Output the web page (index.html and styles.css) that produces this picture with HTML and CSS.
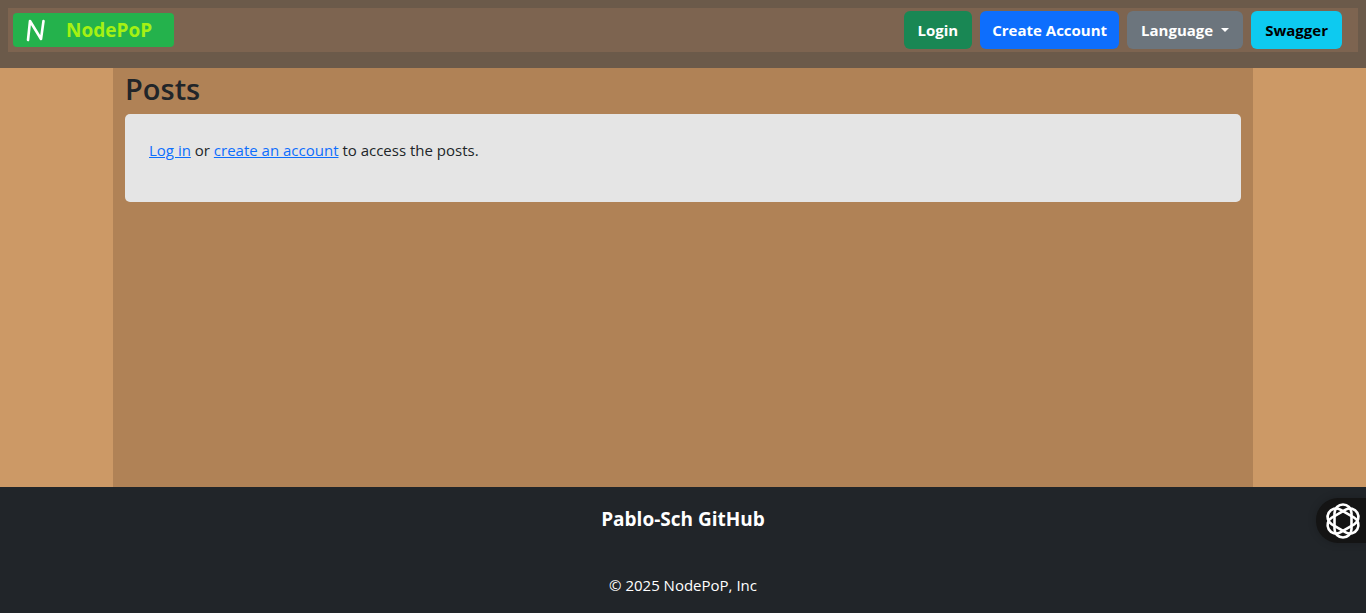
FILE: index.html
```html
<!DOCTYPE html>
<html lang="en">
<head>
<meta charset="utf-8">
<meta name="viewport" content="width=device-width, initial-scale=1">
<title>NodePoP</title>
<link rel="stylesheet" href="styles.css">
</head>
<body>
<header class="site-header">
  <nav class="navbar">
    <a class="brand" href="#">
      <svg class="brand-mark" viewBox="0 0 24 26" aria-hidden="true"><path d="M3 23 L5 4 L16 22 L18.500 4"/></svg>
      <span>NodePoP</span>
    </a>
    <div class="actions">
      <button class="btn btn-success" type="button">Login</button>
      <button class="btn btn-primary" type="button">Create Account</button>
      <button class="btn btn-secondary" type="button" aria-haspopup="true">Language<span class="caret"></span></button>
      <button class="btn btn-info" type="button">Swagger</button>
    </div>
  </nav>
</header>
<main class="container">
  <h1 class="title">Posts</h1>
  <section class="notice">
    <p class="notice-text"><a href="#">Log in</a> or <a href="#">create an account</a> to access the posts.</p>
  </section>
</main>
<footer class="site-footer">
  <a class="footer-link" href="#">Pablo-Sch GitHub</a>
  <p class="copyright">© 2025 NodePoP, Inc</p>
</footer>
<button class="widget" type="button" aria-label="Open assistant">
  <svg class="widget-icon" viewBox="-18 -18 36 36" aria-hidden="true">
    <rect x="-8.500" y="-16.500" width="17" height="33" rx="8.500"/>
    <rect x="-8.500" y="-16.500" width="17" height="33" rx="8.500" transform="rotate(60)"/>
    <rect x="-8.500" y="-16.500" width="17" height="33" rx="8.500" transform="rotate(120)"/>
  </svg>
</button>
</body>
</html>
```
FILE: styles.css
```css
*, *::before, *::after { box-sizing: border-box; }

body {
  margin: 0;
  min-height: 100vh;
  display: flex;
  flex-direction: column;
  background: #cc9966;
  color: #212529;
  font-family: "Segoe UI", "Open Sans", "Noto Sans", sans-serif;
  font-size: 15px;
  line-height: 24px;
}

h1, p { margin: 0; }
a { color: #0d6efd; }

.site-header {
  padding: 8px 8px 16px;
  background: #6b5a4a;
}

.navbar {
  display: flex;
  align-items: center;
  justify-content: space-between;
  height: 44px;
  padding: 0 16px 0 5px;
  background: #7d6450;
}

.brand {
  display: flex;
  align-items: center;
  gap: 17px;
  height: 34px;
  padding: 0 22px 0 12px;
  border-radius: 4px;
  background: #24b24c;
  color: #a5f113;
  font-size: 19px;
  font-weight: 700;
  text-decoration: none;
}

.brand-mark {
  width: 24px;
  height: 26px;
  fill: none;
  stroke: #fff;
  stroke-width: 2.6;
  stroke-linecap: round;
  stroke-linejoin: round;
}

.actions { display: flex; gap: 8px; }

.btn {
  display: flex;
  align-items: center;
  height: 38px;
  padding: 0 14px;
  border: 0;
  border-radius: 6px;
  color: #fff;
  font: inherit;
  font-weight: 700;
}

.btn-success { background: #198754; }
.btn-primary { background: #0d6efd; padding: 0 12px; }
.btn-secondary { background: #6c757d; }
.btn-info { background: #0dcaf0; color: #000; }

.caret {
  margin-left: 8px;
  border-top: 4px solid;
  border-right: 4px solid transparent;
  border-left: 4px solid transparent;
}

.container {
  flex: 1;
  width: 100%;
  max-width: 1140px;
  margin: 0 auto;
  padding: 0 12px;
  background: #b08256;
}

.title {
  padding: 2px 0 6px;
  font-size: 29px;
  font-weight: 600;
  line-height: 38px;
}

.notice {
  padding: 24px 24px 40px;
  border-radius: 5px;
  background: #e5e5e5;
}

.site-footer {
  display: flex;
  flex-direction: column;
  align-items: center;
  gap: 42px;
  padding: 20px 8px 16px;
  background: #212529;
  color: #fff;
}

.footer-link {
  color: #fff;
  font-size: 19px;
  font-weight: 700;
  line-height: 24px;
  text-decoration: none;
}

.widget {
  position: fixed;
  right: 0;
  bottom: 70px;
  display: flex;
  align-items: center;
  height: 45px;
  padding: 0 5px 0 9px;
  border: 0;
  border-radius: 22px 0 0 22px;
  background: #141414;
  box-shadow: 0 0 8px rgba(0, 0, 0, 0.2);
}

.widget-icon {
  width: 36px;
  height: 36px;
  fill: none;
  stroke: #fff;
  stroke-width: 2.6;
}
```
